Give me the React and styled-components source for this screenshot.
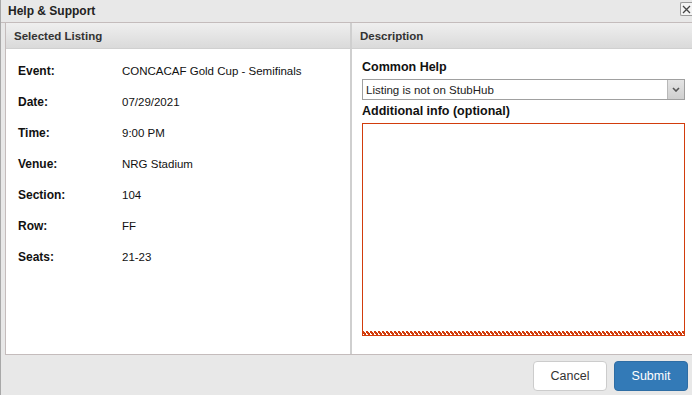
import { Fragment } from "react"
import styled, { createGlobalStyle } from "styled-components"

const GlobalStyle = createGlobalStyle`
  html, body {
    margin: 0;
    padding: 0;
    background: #e8e8e8;
  }
  body {
    font-family: "Liberation Sans", Arial, sans-serif;
    font-size: 11.5px;
    color: #111;
  }
`

const Dialog = styled.div`
  width: 692px;
  height: 395px;
  box-sizing: border-box;
  border-left: 1px solid #a8a8a8;
  background: #e8e8e8;
  display: flex;
  flex-direction: column;
  overflow: hidden;
`

const TitleBar = styled.div`
  height: 22px;
  flex: none;
  display: flex;
  align-items: center;
  justify-content: space-between;
  padding-left: 7px;
  border-bottom: 1px solid #c4bcbc;
  font-weight: bold;
  font-size: 12px;
  color: #222;
`

const CloseButton = styled.button`
  width: 12px;
  height: 14px;
  margin-top: -4px;
  padding: 0;
  border: 1px solid #9a9a9a;
  border-right: none;
  border-radius: 2px 0 0 2px;
  background: #f4f4f4;
  display: flex;
  align-items: center;
  justify-content: center;
`

const Body = styled.div`
  flex: 1;
  padding: 0 0 0 4px;
  display: flex;
  flex-direction: column;
`

const Panels = styled.div`
  height: 331px;
  display: grid;
  grid-template-columns: 344px 1fr;
  border: 1px solid #c4bcbc;
  border-top: none;
  border-right: none;
  background: #fff;
`

const Column = styled.div`
  display: flex;
  flex-direction: column;
  border-left: ${(p) => (p.$divided ? "2px solid #cfcfcf" : "none")};
`

const Header = styled.div`
  height: 25px;
  flex: none;
  display: flex;
  align-items: center;
  padding-left: 8px;
  background: linear-gradient(#efefef, #dadada);
  border-bottom: 1px solid #d0d0d0;
  font-weight: bold;
  font-size: 11.5px;
  color: #333;
`

const Details = styled.div`
  display: grid;
  grid-template-columns: 104px 1fr;
  grid-auto-rows: 31px;
  padding: 14px 0 0 12px;
`

const Label = styled.div`
  font-weight: bold;
  font-size: 12px;
  line-height: 17px;
`

const Value = styled.div`
  line-height: 17px;
`

const Form = styled.div`
  display: flex;
  flex-direction: column;
  padding: 10px 7px 0 10px;
`

const FieldLabel = styled.div`
  font-weight: bold;
  font-size: 12.5px;
  line-height: 16px;
  margin-bottom: 4px;
`

const Select = styled.div`
  height: 19px;
  border: 1px solid #a0a0a0;
  display: flex;
  align-items: stretch;
  margin-bottom: 3px;
`

const SelectText = styled.div`
  flex: 1;
  display: flex;
  align-items: center;
  padding-left: 3px;
  color: #222;
`

const SelectArrow = styled.div`
  width: 16px;
  background: linear-gradient(#e4e4e4, #cfcfcf);
  border-left: 1px solid #b8b8b8;
  display: flex;
  align-items: center;
  justify-content: center;
`

const TextArea = styled.div`
  height: 212px;
  border: 1px solid #d23c0c;
  border-bottom: none;
  background: #fff;
  position: relative;
  &::after {
    content: "";
    position: absolute;
    left: -1px;
    right: -1px;
    bottom: 0;
    height: 5px;
    border-bottom: 1px solid #d23c0c;
    box-sizing: border-box;
    background:
      linear-gradient(45deg, transparent 33%, #d23c0c 33%, #d23c0c 66%, transparent 66%) 0 0 / 4px 4px repeat-x;
  }
`

const Footer = styled.div`
  flex: 1;
  display: flex;
  justify-content: flex-end;
  align-items: flex-start;
  gap: 7px;
  padding: 6px 4px 0 0;
`

const Button = styled.button`
  height: 30px;
  width: 74px;
  border-radius: 4px;
  border: 1px solid ${(p) => (p.$primary ? "#2e6da4" : "#ccc")};
  background: ${(p) => (p.$primary ? "#337ab7" : "#fff")};
  color: ${(p) => (p.$primary ? "#fff" : "#333")};
  font-family: "Liberation Sans", Arial, sans-serif;
  font-size: 12.5px;
`

const rows = [
  ["Event:", "CONCACAF Gold Cup - Semifinals"],
  ["Date:", "07/29/2021"],
  ["Time:", "9:00 PM"],
  ["Venue:", "NRG Stadium"],
  ["Section:", "104"],
  ["Row:", "FF"],
  ["Seats:", "21-23"],
]

export default function App() {
  return (
    <>
      <GlobalStyle />
      <Dialog>
        <TitleBar>
          Help &amp; Support
          <CloseButton>
            <svg width="9" height="9" viewBox="0 0 9 9">
              <path d="M1 1L8 8M8 1L1 8" stroke="#444" strokeWidth="1.3" />
            </svg>
          </CloseButton>
        </TitleBar>
        <Body>
          <Panels>
            <Column>
              <Header>Selected Listing</Header>
              <Details>
                {rows.map(([label, value]) => (
                  <Fragment key={label}>
                    <Label>{label}</Label>
                    <Value>{value}</Value>
                  </Fragment>
                ))}
              </Details>
            </Column>
            <Column $divided>
              <Header>Description</Header>
              <Form>
                <FieldLabel>Common Help</FieldLabel>
                <Select>
                  <SelectText>Listing is not on StubHub</SelectText>
                  <SelectArrow>
                    <svg width="8" height="5" viewBox="0 0 8 5">
                      <path d="M1 1L4 4L7 1" stroke="#555" strokeWidth="1.6" fill="none" />
                    </svg>
                  </SelectArrow>
                </Select>
                <FieldLabel>Additional info (optional)</FieldLabel>
                <TextArea />
              </Form>
            </Column>
          </Panels>
          <Footer>
            <Button>Cancel</Button>
            <Button $primary>Submit</Button>
          </Footer>
        </Body>
      </Dialog>
    </>
  )
}
